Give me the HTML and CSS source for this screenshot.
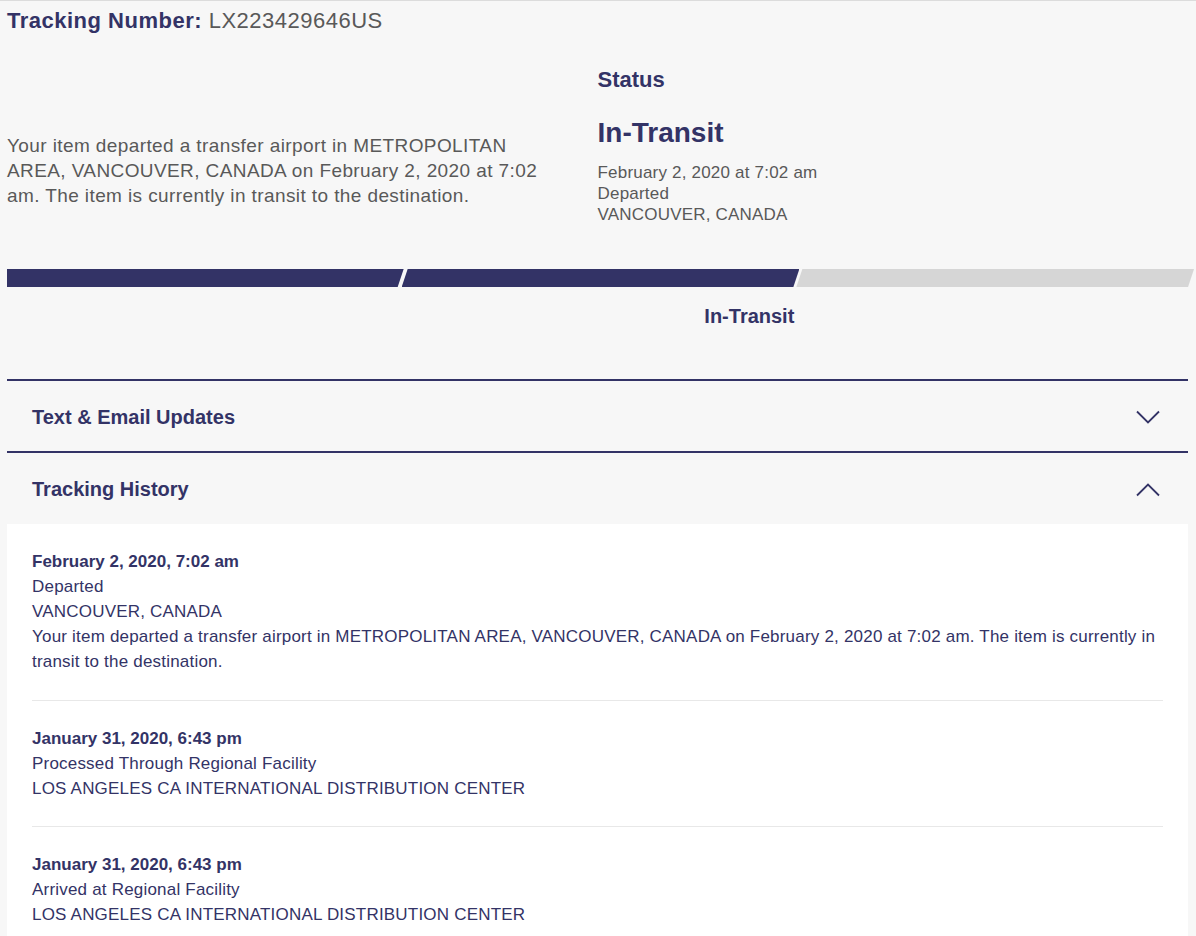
FILE: index.html
```html
<!DOCTYPE html>
<html lang="en">
<head>
<meta charset="utf-8">
<title>Tracking</title>
<link rel="stylesheet" href="styles.css">
</head>
<body>
<div class="page">
  <h1 class="tracking-number"><span class="label">Tracking Number:</span> <span class="value">LX223429646US</span></h1>

  <div class="summary">
    <p class="summary-text">Your item departed a transfer airport in METROPOLITAN AREA, VANCOUVER, CANADA on February 2, 2020 at 7:02 am. The item is currently in transit to the destination.</p>
    <div class="status">
      <h2 class="status-title">Status</h2>
      <h3 class="status-value">In-Transit</h3>
      <div class="status-lines">
        <div>February 2, 2020 at 7:02 am</div>
        <div>Departed</div>
        <div>VANCOUVER, CANADA</div>
      </div>
    </div>
  </div>

  <div class="progress">
    <div class="seg seg-first done"></div>
    <div class="seg seg-mid done"></div>
    <div class="seg seg-last"></div>
  </div>
  <div class="progress-labels">
    <div class="plabel"></div>
    <div class="plabel active">In-Transit</div>
    <div class="plabel"></div>
  </div>

  <div class="panel panel-first">
    <div class="panel-header">
      <span class="panel-title">Text &amp; Email Updates</span>
      <svg class="chev" width="24" height="14" viewBox="0 0 24 14"><path d="M1 1.5 L12 12.5 L23 1.5" fill="none" stroke="#333366" stroke-width="1.8"/></svg>
    </div>
  </div>

  <div class="panel">
    <div class="panel-header panel-header-open">
      <span class="panel-title">Tracking History</span>
      <svg class="chev" width="24" height="14" viewBox="0 0 24 14"><path d="M1 12.5 L12 1.5 L23 12.5" fill="none" stroke="#333366" stroke-width="1.8"/></svg>
    </div>
    <div class="history">
      <div class="entry">
        <div class="entry-date">February 2, 2020, 7:02 am</div>
        <div>Departed</div>
        <div>VANCOUVER, CANADA</div>
        <div>Your item departed a transfer airport in METROPOLITAN AREA, VANCOUVER, CANADA on February 2, 2020 at 7:02 am. The item is currently in transit to the destination.</div>
      </div>
      <div class="entry">
        <div class="entry-date">January 31, 2020, 6:43 pm</div>
        <div>Processed Through Regional Facility</div>
        <div>LOS ANGELES CA INTERNATIONAL DISTRIBUTION CENTER</div>
      </div>
      <div class="entry">
        <div class="entry-date">January 31, 2020, 6:43 pm</div>
        <div>Arrived at Regional Facility</div>
        <div>LOS ANGELES CA INTERNATIONAL DISTRIBUTION CENTER</div>
      </div>
    </div>
  </div>
</div>
</body>
</html>
```

FILE: styles.css
```css
* { box-sizing: border-box; }
html, body { margin: 0; padding: 0; }
body {
  background: #f7f7f7;
  border-top: 1px solid #dcdcdc;
  font-family: "Liberation Sans", Arial, Helvetica, sans-serif;
  color: #333366;
}
.page {
  padding: 0 8px 0 7px;
}
.tracking-number {
  margin: 8px 0 0 0;
  font-size: 22px;
  line-height: 24px;
  font-weight: normal;
  letter-spacing: 0.5px;
}
.tracking-number .label { font-weight: bold; color: #333366; }
.tracking-number .value { color: #595959; }

.summary {
  display: grid;
  grid-template-columns: 1fr 1fr;
  margin-top: 35px;
}
.summary-text {
  margin: 65px 0 0 0;
  font-size: 19px;
  line-height: 25px;
  letter-spacing: 0.4px;
  color: #595959;
  padding-right: 42px;
}
.status-title {
  margin: 0;
  font-size: 22px;
  line-height: 24px;
  font-weight: bold;
  color: #333366;
}
.status-value {
  margin: 24px 0 0 0;
  font-size: 28px;
  line-height: 34px;
  font-weight: bold;
  color: #333366;
}
.status-lines {
  margin-top: 11.5px;
  font-size: 17px;
  line-height: 21px;
  letter-spacing: 0.2px;
  color: #595959;
}

.progress {
  display: flex;
  height: 18px;
  margin-top: 44.5px;
  margin-right: -6px;
}
.seg {
  flex: 1;
  background: #d6d6d6;
  clip-path: polygon(6px 0, 100% 0, calc(100% - 6px) 100%, 0 100%);
  margin-left: -3px;
}
.seg.done { background: #333366; }
.seg-first {
  margin-left: 0;
  clip-path: polygon(0 0, calc(100% - 1px) 0, calc(100% - 7px) 100%, 0 100%);
}

.progress-labels {
  display: flex;
  margin-top: 17px;
}
.plabel {
  flex: 1;
  text-align: right;
  font-size: 20px;
  line-height: 24px;
  font-weight: bold;
  color: #333366;
  min-height: 24px;
}

.panel {
  border-top: 2px solid #333366;
}
.panel-first { margin-top: 51px; }
.panel-header {
  height: 70px;
  display: flex;
  align-items: center;
  justify-content: space-between;
  padding: 2px 28px 0 25px;
}
.panel-header-open { height: 71px; }
.panel-title {
  font-size: 20px;
  font-weight: bold;
  color: #333366;
}
.chev { display: block; }

.history {
  background: #ffffff;
  padding: 0 25px;
  font-size: 17px;
  line-height: 25px;
  letter-spacing: 0.2px;
  color: #333366;
}
.entry {
  padding: 25px 0 25.5px 0;
  border-bottom: 1px solid #e8e8e8;
}
.entry-date { font-weight: bold; letter-spacing: 0; }
```
